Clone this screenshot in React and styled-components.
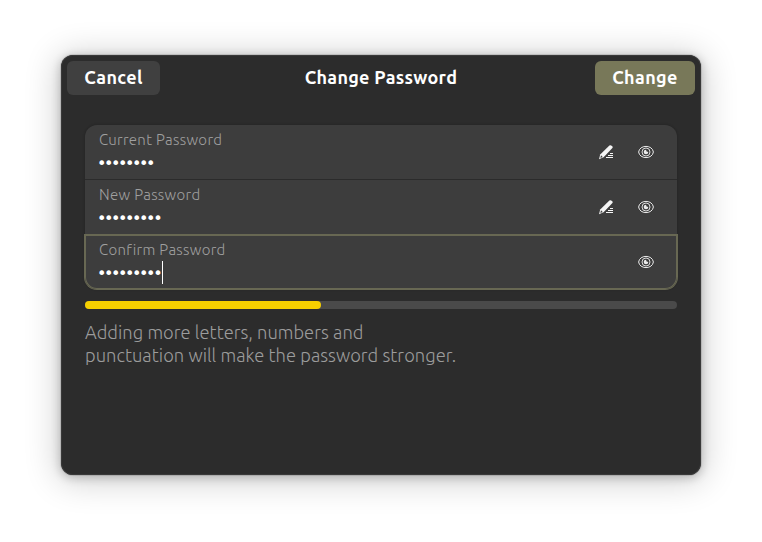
import React from "react"
import styled, { createGlobalStyle } from 'styled-components';

const GlobalStyle = createGlobalStyle`
  * {
    box-sizing: border-box;
  }
  body {
    margin: 0;
    background: #ffffff;
    font-family: Ubuntu, 'Noto Sans', sans-serif;
  }
`

const Desktop = styled.div`
  width: 762px;
  height: 542px;
  padding: 55px 61px;
  overflow: hidden;
`

const Dialog = styled.div`
  display: flex;
  flex-direction: column;
  width: 640px;
  height: 420px;
  border-radius: 12px;
  background: #2c2c2c;
  box-shadow: inset 0 0 0 1px #393939, 0 0 0 1px rgba(0, 0, 0, 0.1), 0 2px 10px 1px rgba(0, 0, 0, 0.2), 0 3px 34px 3px rgba(0, 0, 0, 0.2);
`

const Header = styled.div`
  display: grid;
  grid-template-columns: 100px 1fr 100px;
  align-items: center;
  height: 46px;
  padding: 0 6px;
`

const Title = styled.div`
  padding-bottom: 2px;
  color: #ffffff;
  font-size: 18px;
  font-weight: 600;
  line-height: 24px;
  letter-spacing: 0.28px;
  text-align: center;
  white-space: nowrap;
`

const Button = styled.button`
  width: ${props => props.$suggested ? '100px' : '93px'};
  height: 34px;
  padding: 0 0 3px;
  border: 0;
  border-radius: 6px;
  background: ${props => props.$suggested ? '#787859' : '#404040'};
  color: #ffffff;
  font-family: inherit;
  font-size: 18px;
  font-weight: 600;
  letter-spacing: 0.4px;
`

const Content = styled.div`
  padding: 24px;
`

const FieldList = styled.div`
  border-radius: 12px;
  background: #3d3d3d;
  box-shadow: 0 0 2px 1px rgba(0, 0, 0, 0.12);
`

const Field = styled.div`
  display: flex;
  align-items: center;
  height: ${props => props.$focused ? '54px' : '55px'};
  padding: 0 23px 0 14px;
  border-bottom: ${props => props.$focused ? '0' : '1px solid #2b2b2b'};
  border-radius: ${props => props.$focused ? '0 0 12px 12px' : '0'};
  box-shadow: ${props => props.$focused ? '0 0 0 1px #686853, inset 0 0 0 1px #686853' : 'none'};
`

const FieldText = styled.div`
  flex: 1;
  height: 54px;
  padding-top: 5px;
`

const Label = styled.div`
  color: #a0a0a0;
  font-size: 15px;
  font-weight: 300;
  line-height: 20px;
  letter-spacing: 0.32px;
`

const Value = styled.div`
  display: flex;
  align-items: center;
  height: 24px;
  color: #ffffff;
  font-family: 'DejaVu Sans', sans-serif;
  font-size: 16px;
  line-height: 24px;
  letter-spacing: -2.42px;
  text-indent: -2px;
`

const Dots = styled.span`
  padding-top: 4px;
`

const Caret = styled.span`
  width: 1px;
  height: 23px;
  margin-top: 1px;
  margin-left: 2px;
  background: #ffffff;
`

const Actions = styled.div`
  display: flex;
  gap: 24px;

  svg {
    display: block;
  }
`

const Meter = styled.div`
  height: 8px;
  margin-top: 12px;
  border-radius: 4px;
  background: #4a4a4a;
`

const MeterFill = styled.div`
  height: 8px;
  border-radius: 4px;
  background: #f6d000;
`

const Hint = styled.div`
  margin-top: 12px;
  color: #9c9c9c;
  font-size: 18.33px;
  font-weight: 300;
  line-height: 23px;
  letter-spacing: 0.03px;
  white-space: nowrap;
`

const EditIcon = () => (
  <svg width="16" height="16" viewBox="0 0 16 16">
    <path d="M11.4 1.5Q12.3.8 13.2 1.5L14.5 2.6Q15.1 3.3 14.4 4.1L5.6 13.2 1 15.2 2.2 10.6z" fill="#f5f5f5" />
    <path d="m3 11.3 1.7 1.6-2.3 1.1z" fill="#3d3d3d" />
    <path d="M12 9.5h3M10 11.5h5M8 13.5h7" stroke="#f5f5f5" strokeWidth="1" />
  </svg>
)

const EyeIcon = () => (
  <svg width="16" height="16" viewBox="0 0 16 16" fill="none" stroke="#ebebeb">
    <path d="M.6 8C1.2 4.4 4.2 2.4 8 2.4S14.8 4.4 15.4 8C14.8 11.6 11.8 13.6 8 13.6S1.2 11.6.6 8z" strokeWidth="1" />
    <circle cx="8" cy="8" r="4" strokeWidth="0.9" />
    <path d="M8 5.7Q8 8 10.3 8A2.3 2.3 0 1 1 8 5.7z" fill="#ebebeb" stroke="none" />
  </svg>
)

const fields = [
  { label: 'Current Password', length: 8, editable: true },
  { label: 'New Password', length: 9, editable: true },
  { label: 'Confirm Password', length: 9, focused: true },
]

const App = () => {
  const strength = 236 / 592

  return (
    <>
      <GlobalStyle />
      <Desktop>
        <Dialog>
          <Header>
            <Button>Cancel</Button>
            <Title>Change Password</Title>
            <Button $suggested>Change</Button>
          </Header>
          <Content>
            <FieldList>
              {fields.map(field => (
                <Field key={field.label} $focused={field.focused}>
                  <FieldText>
                    <Label>{field.label}</Label>
                    <Value>
                      <Dots>{'•'.repeat(field.length)}</Dots>
                      {field.focused && <Caret />}
                    </Value>
                  </FieldText>
                  <Actions>
                    {field.editable && <EditIcon />}
                    <EyeIcon />
                  </Actions>
                </Field>
              ))}
            </FieldList>
            <Meter>
              <MeterFill style={{ width: `${strength * 100}%` }} />
            </Meter>
            <Hint>
              Adding more letters, numbers and<br />
              punctuation will make the password stronger.
            </Hint>
          </Content>
        </Dialog>
      </Desktop>
    </>
  )
}

export default App
